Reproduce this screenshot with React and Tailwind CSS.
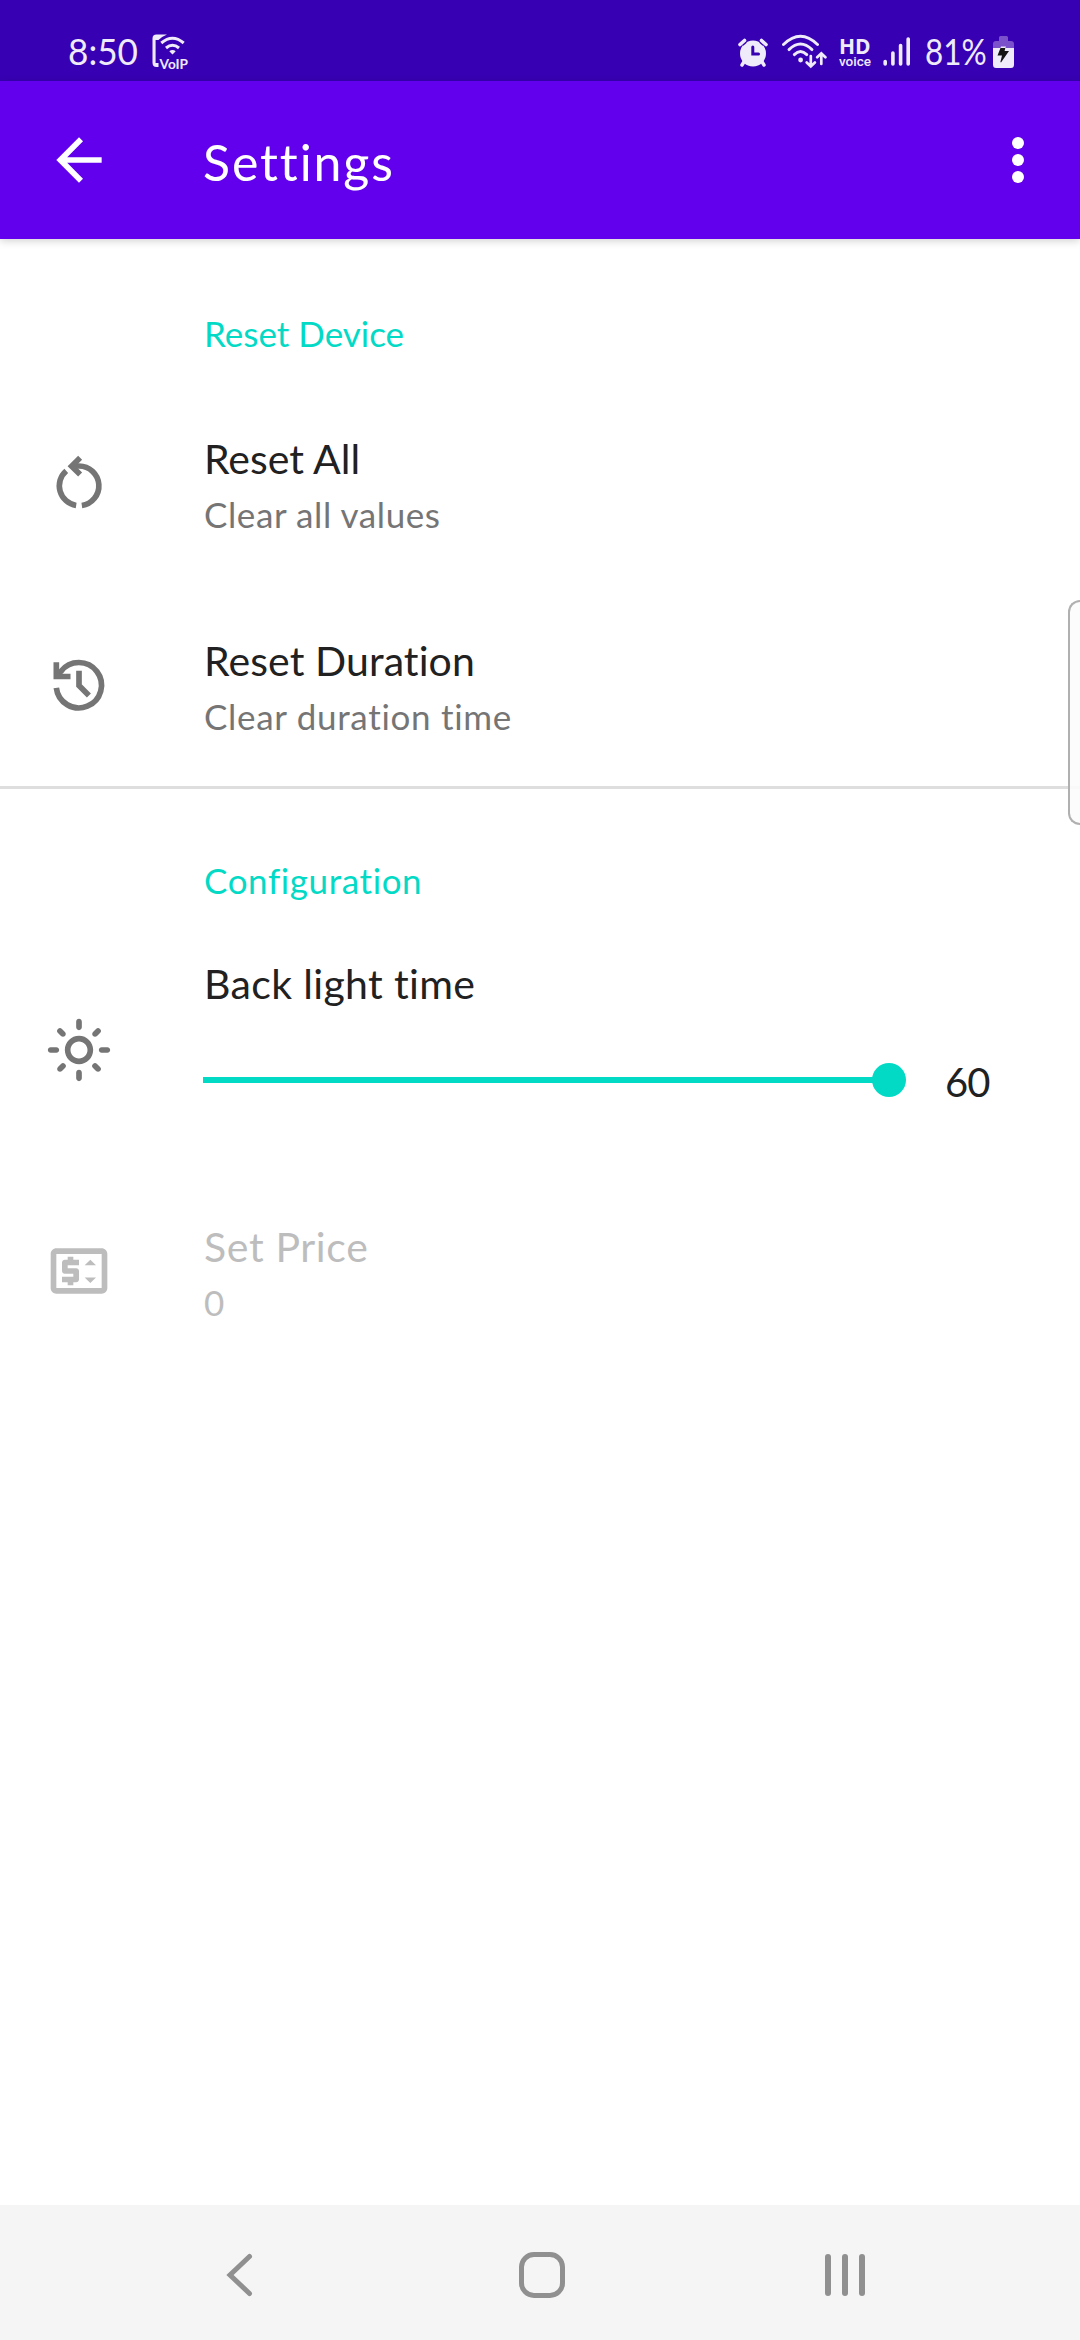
import React from "react";
import { MdArrowBack, MdOutlineLightMode, MdOutlinePriceChange } from "react-icons/md";

function VoipIcon() {
  return (
    <svg width="38" height="38" viewBox="0 0 38 38" fill="none">
      <path d="M16 1.5H5.5Q1.5 1.5 1.5 5.5V29.5Q1.5 34 5.5 34H7.5V30H4.6V7H7.5Q11 3.500 16 1.500Z" fill="#efebfa" />
      <g stroke="#efebfa" strokeWidth="3">
        <path d="M10.3 10Q21.5 0.5 32.7 10" />
        <path d="M15 15Q21.5 9.5 28 15" />
      </g>
      <path d="M18.3 18.2Q21.5 15.8 24.7 18.2L21.5 21.5Z" fill="#efebfa" />
      <text x="8.5" y="36" fontSize="14" fontWeight="700" fontFamily="Lato, sans-serif" fill="#efebfa" textLength="28.5" lengthAdjust="spacingAndGlyphs">VoIP</text>
    </svg>
  );
}

function AlarmIcon() {
  return (
    <svg width="30" height="30" viewBox="0 0 30 30" fill="none">
      <circle cx="15" cy="15.5" r="13" fill="#efebfa" />
      <path d="M3 5L6.500 2M27 5L23.500 2" stroke="#3700b3" strokeWidth="7" />
      <path d="M2 6.500L6.500 2.500M28 6.500L23.500 2.500" stroke="#efebfa" strokeWidth="3.600" strokeLinecap="round" />
      <path d="M6.500 23L4 27M23.500 23L26 27" stroke="#efebfa" strokeWidth="3.400" strokeLinecap="round" />
      <path d="M14.800 9V16H20.500" stroke="#3700b3" strokeWidth="3" strokeLinecap="round" />
    </svg>
  );
}

function WifiIcon() {
  return (
    <svg width="46" height="36" viewBox="0 0 46 36" fill="none" stroke="#efebfa" strokeWidth="2.900" strokeLinecap="round">
      <path d="M2.500 10.500Q19.500 -6 36.500 10.500" />
      <path d="M8 15.600Q19.500 4.500 31 15.600" />
      <path d="M13.300 20.600Q19.500 14.500 25.800 20.600" />
      <circle cx="19.600" cy="26" r="2.400" fill="#efebfa" stroke="none" />
      <path d="M29.800 22V32M25.700 28.500L29.800 32.400L33.900 28.500" strokeWidth="2.700" />
      <path d="M40.300 30V20M36.200 23.300L40.300 19.300L44.400 23.300" strokeWidth="2.700" />
    </svg>
  );
}

function SignalIcon() {
  return (
    <svg width="28" height="32" viewBox="0 0 28 32" stroke="#efebfa" strokeWidth="3.600" strokeLinecap="round">
      <path d="M2.200 25.500V28M9.900 17V28M17.600 9.500V28M25.200 3V28" />
    </svg>
  );
}

function BatteryIcon() {
  return (
    <svg width="21" height="32" viewBox="0 0 21 32">
      <path d="M6 5V1.500Q6 0 7.500 0H13.500Q15 0 15 1.500V5H18Q21 5 21 8V12H0V8Q0 5 3 5Z" fill="#7a51cb" />
      <path d="M0 12H21V28.500Q21 32 18 32H3Q0 32 0 28.500Z" fill="#efebfa" />
      <path d="M8 10.500H13L12.300 12H7.500Z" fill="#efebfa" />
      <path d="M7.500 12H12.300L11.600 15H16L8 26.500L7.400 26L9 19.500H4.500Z" fill="#141414" />
    </svg>
  );
}

function ResetIcon() {
  return (
    <svg width="68" height="68" viewBox="0 0 24 24" fill="none" stroke="#757575" strokeWidth="2">
      <path d="M7.500 7.700A7 7 0 0 0 11 19.930" />
      <path d="M13 19.930A7 7 0 0 0 12 6H10" />
      <path d="M12.400 3.100L9.400 6.050L12.400 9" />
    </svg>
  );
}

function HistoryIcon() {
  return (
    <svg width="68" height="68" viewBox="0 0 24 24" fill="none" stroke="#757575" strokeWidth="2">
      <path d="M4 13A8 8 0 1 0 5.600 7.200L4.200 8.700" />
      <path d="M4 4V9H9" />
      <path d="M12 7V12.200L15.500 15.700" />
    </svg>
  );
}

function Header({ children, className }) {
  return (
    <div className={"flex h-[143px] pt-[66px] pl-[204px] text-[35px] leading-[57px] text-[#03dac6] " + className}>
      <h2>{children}</h2>
    </div>
  );
}

function Row({ icon, title, titleClass, sub, subClass }) {
  return (
    <div className="flex h-[202px] items-center">
      <div className="flex w-[204px] pl-[45px]">{icon}</div>
      <div className="pt-2">
        <div className={"text-[41px] leading-[54px] " + titleClass}>{title}</div>
        <div className={"text-[35px] leading-[56px] " + subClass}>{sub}</div>
      </div>
    </div>
  );
}

export default function App() {
  return (
    <div className="relative flex h-[2340px] w-[1080px] flex-col overflow-hidden bg-white font-['Lato',sans-serif] whitespace-nowrap [font-variant-ligatures:none]">
      <div className="flex h-[81px] shrink-0 items-start bg-[#3700b3] pl-[68px] text-[#efebfa]">
        <span className="mt-[29px] w-[83px] origin-left scale-x-[0.95] text-[37px] leading-[44px]">8:50</span>
        <span className="mt-[33px]"><VoipIcon /></span>
        <span className="mt-[38px] ml-[549px]"><AlarmIcon /></span>
        <span className="mt-[34px] ml-[13px]"><WifiIcon /></span>
        <span className="mt-[37px] ml-[12px] flex w-[44px] flex-col">
          <span className="font-['Open_Sans',sans-serif] text-[21px] leading-[18px] font-bold">HD</span>
          <span className="font-['Roboto',sans-serif] text-[13.500px] leading-[12px] font-medium">voice</span>
        </span>
        <span className="mt-[36px]"><SignalIcon /></span>
        <span className="mt-[29px] ml-[14px] w-[68px] origin-left scale-x-[0.85] text-[37px] leading-[44px]"><span className="-mr-4">81%</span></span>
        <span className="mt-[36px]"><BatteryIcon /></span>
      </div>
      <header className="flex h-[158px] shrink-0 items-center bg-[#6200ee] text-white shadow-[0_2px_8px_rgba(0,0,0,0.18)]">
        <div className="flex w-[203px] pl-[45px]"><MdArrowBack size={68} /></div>
        <h1 className="flex-1 pt-[3px] text-[50px] leading-[60px] tracking-[1.900px]">Settings</h1>
        <div className="mr-[56px] flex flex-col gap-[5px]">
          <i className="size-3 rounded-full bg-white" />
          <i className="size-3 rounded-full bg-white" />
          <i className="size-3 rounded-full bg-white" />
        </div>
      </header>
      <main className="flex-1">
        <Header className="">Reset Device</Header>
        <Row icon={<ResetIcon />} title="Reset All" sub="Clear all values" titleClass="text-[#212121]" subClass="text-[#757575] tracking-[0.6px]" />
        <Row icon={<HistoryIcon />} title="Reset Duration" sub="Clear duration time" titleClass="text-[#212121] tracking-[0.1px]" subClass="text-[#757575] tracking-[0.7px]" />
        <div className="h-[3px] bg-[#dedede]" />
        <Header className="-mt-[3px] tracking-[0.6px]">Configuration</Header>
        <div className="flex h-[241px] items-center">
          <div className="flex w-[203px] pl-[45px]"><MdOutlineLightMode size={68} color="#757575" /></div>
          <div className="flex h-full flex-col pt-7">
            <div className="pl-px text-[41px] leading-[54px] tracking-[0.350px] text-[#212121]">Back light time</div>
            <div className="flex flex-1 items-center pb-[22px]">
              <div className="flex w-[703px] items-center">
                <div className="h-1.5 flex-1 bg-[#03dac6]" />
                <div className="-ml-px size-[34px] rounded-full bg-[#03dac6]" />
              </div>
              <span className="ml-[39px] pt-1 text-[40px] leading-none tracking-[-1px] text-[#212121]">60</span>
            </div>
          </div>
        </div>
        <Row icon={<MdOutlinePriceChange size={68} color="#bdbdbd" />} title="Set Price" sub="0" titleClass="text-[#bdbdbd] tracking-[0.650px]" subClass="text-[#bdbdbd]" />
      </main>
      <nav className="flex h-[135px] shrink-0 items-center bg-[#f5f5f5] pt-1">
        <svg className="ml-[226px]" width="28" height="44" viewBox="0 0 28 44" fill="none" stroke="#909090" strokeWidth="5" strokeLinecap="round">
          <path d="M23.500 3.500L4 22L23.500 40.500" />
        </svg>
        <div className="ml-[265px] size-[46px] rounded-[15px] border-[5.500px] border-[#909090]" />
        <div className="ml-[260px] flex gap-[11px]">
          <i className="h-[42px] w-1.5 rounded-full bg-[#909090]" />
          <i className="h-[42px] w-1.5 rounded-full bg-[#909090]" />
          <i className="h-[42px] w-1.5 rounded-full bg-[#909090]" />
        </div>
      </nav>
      <div className="absolute top-[600px] right-0 h-[225px] w-[12px] rounded-l-[12px] border-2 border-r-0 border-[#b0b0b0] bg-[#fcfcfc]/90" />
    </div>
  );
}
